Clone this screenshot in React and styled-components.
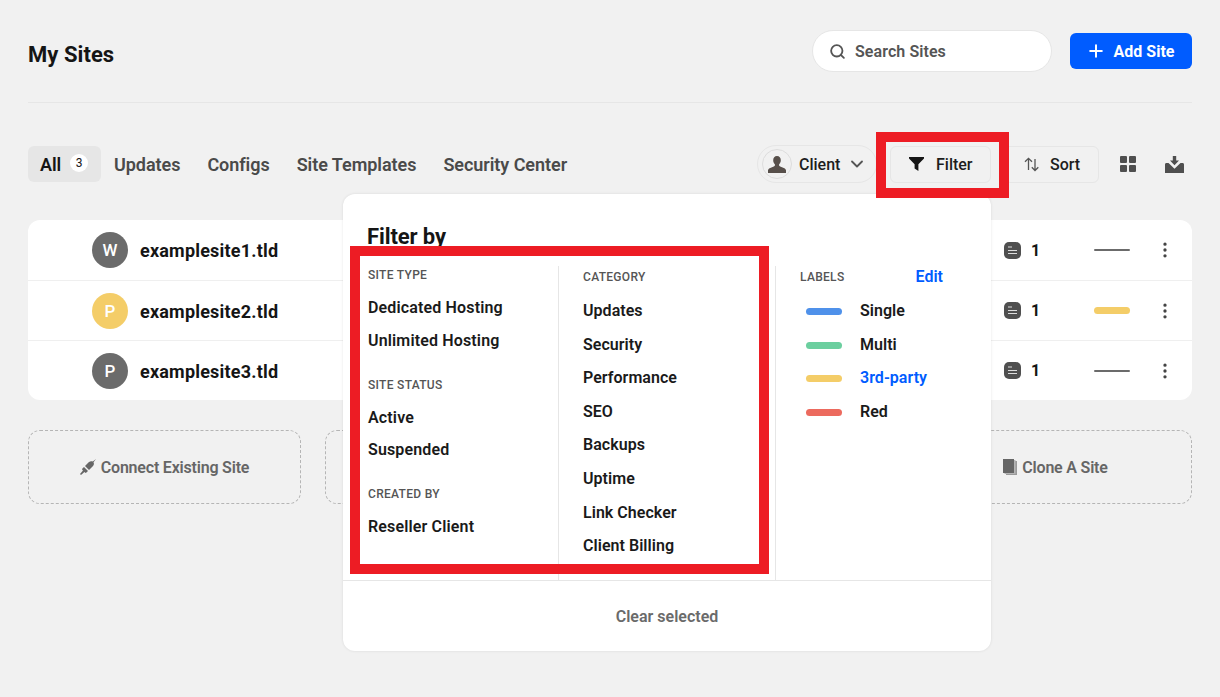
import React from "react";
import styled, { createGlobalStyle } from "styled-components";
import { Search, Plus, ChevronDown, MoreVertical } from "lucide-react";

const GlobalStyle = createGlobalStyle`
  html, body {
    margin: 0;
    background: #f1f1f1;
    font-family: Roboto, "Liberation Sans", sans-serif;
    color: #151515;
  }
  * {
    box-sizing: border-box;
  }
`;

const Page = styled.div`
  position: relative;
  width: 1220px;
  height: 697px;
  padding: 30px 28px 0;
  overflow: hidden;
`;

const Header = styled.header`
  display: flex;
  align-items: center;
  height: 73px;
  padding-bottom: 31px;
  border-bottom: 1px solid #e6e6e6;
`;

const Title = styled.h1`
  flex: 1;
  margin: 8px 0 0;
  font-size: 22px;
  font-weight: 700;
  line-height: 28px;
  letter-spacing: 0.05px;
  color: #151515;
`;

const SearchBox = styled.div`
  display: flex;
  align-items: center;
  gap: 9px;
  width: 240px;
  height: 42px;
  padding: 1px 0 0 16px;
  margin-right: 18px;
  background: #fff;
  border: 1px solid #e6e6e6;
  border-radius: 21px;
  font-size: 16px;
  font-weight: 600;
  letter-spacing: 0.08px;
  color: #555;
`;

const AddButton = styled.button`
  display: flex;
  align-items: center;
  justify-content: center;
  gap: 8px;
  width: 122px;
  height: 36px;
  padding: 1px 2px 0 0;
  border: 0;
  border-radius: 6px;
  background: #005cff;
  color: #fff;
  font: 700 16px Roboto, sans-serif;
`;

const Toolbar = styled.div`
  display: flex;
  align-items: center;
  height: 38px;
  margin-top: 42px;
`;

const Tabs = styled.nav`
  display: flex;
  align-items: center;
  flex: 1;
  gap: 27px;
`;

const Tab = styled.span`
  display: flex;
  align-items: center;
  gap: 9px;
  height: 36px;
  font-size: 18px;
  font-weight: 600;
  letter-spacing: -0.05px;
  color: ${(p) => (p.$active ? "#151515" : "#4a4a4a")};
  ${(p) =>
    p.$active &&
    `
    width: 73px;
    padding: 0 12px;
    margin-right: -14px;
    background: #e6e6e6;
    border-radius: 6px;
  `}
`;

const Count = styled.span`
  display: flex;
  align-items: center;
  justify-content: center;
  flex: none;
  width: 18px;
  height: 18px;
  margin-top: -2px;
  border-radius: 50%;
  background: #fff;
  font-size: 12px;
  font-weight: 400;
`;

const Controls = styled.div`
  display: flex;
  align-items: center;
  margin-right: 8px;
`;

const ClientButton = styled.div`
  display: flex;
  align-items: center;
  width: 120px;
  height: 38px;
  padding-left: 4px;
  border: 1px solid #e6e6e6;
  border-radius: 19px;
  font-size: 16px;
  font-weight: 500;
  color: #1d1d1d;
`;

const ClientAvatar = styled.span`
  display: flex;
  align-items: center;
  justify-content: center;
  width: 30px;
  height: 30px;
  margin-right: 7px;
  border: 1px solid #ddd;
  border-radius: 50%;
`;

const Chevron = styled(ChevronDown)`
  margin-left: 7px;
  color: #555;
`;

const ToolButton = styled.div`
  display: flex;
  align-items: center;
  gap: ${(p) => p.$gap}px;
  width: ${(p) => p.$width}px;
  height: 37px;
  padding-left: ${(p) => p.$pad}px;
  margin-left: 13px;
  border: 1px solid #e6e6e6;
  border-radius: 6px;
  font-size: 16px;
  font-weight: 500;
  color: #1d1d1d;
`;

const IconButton = styled.span`
  display: flex;
  margin-left: ${(p) => p.$left}px;
`;

const SiteList = styled.section`
  margin-top: 37px;
  background: #fff;
  border-radius: 12px;
`;

const SiteRow = styled.div`
  display: flex;
  align-items: center;
  height: 60px;
  padding: 0 17px 0 64px;
  border-top: ${(p) => (p.$first ? "0" : "1px solid #efefef")};
`;

const SiteIdentity = styled.div`
  display: flex;
  align-items: center;
  flex: 1;
  margin-top: ${(p) => (p.$first ? 0 : 1)}px;
`;

const SiteAvatar = styled.span`
  display: flex;
  align-items: center;
  justify-content: center;
  width: 36px;
  height: 36px;
  margin-right: 12px;
  border-radius: 50%;
  background: ${(p) => p.$color};
  color: #fff;
  font-size: 17px;
  font-weight: 500;
`;

const SiteName = styled.span`
  font-size: 18px;
  font-weight: 700;
  letter-spacing: 0.2px;
  color: #151515;
`;

const PageCount = styled.span`
  width: 63px;
  margin-left: 10px;
  font-size: 16px;
  font-weight: 700;
`;

const LabelBar = styled.span`
  display: block;
  width: 36px;
  height: ${(p) => (p.$thin ? "2px" : "7px")};
  border-radius: 4px;
  background: ${(p) => p.$color};
`;

const RowMenu = styled.span`
  display: flex;
  margin-left: 25px;
  color: #444;
`;

const ActionGrid = styled.div`
  display: grid;
  grid-template-columns: repeat(4, 1fr);
  gap: 24px;
  margin-top: 30px;
`;

const ActionCard = styled.div`
  display: flex;
  align-items: center;
  justify-content: center;
  gap: 5px;
  height: 74px;
  border: 1px dashed #b5b5b5;
  border-radius: 12px;
  font-size: 16px;
  font-weight: 600;
  letter-spacing: -0.2px;
  color: #666;
`;

const Popup = styled.div`
  position: absolute;
  top: 194px;
  left: 343px;
  display: flex;
  flex-direction: column;
  width: 648px;
  height: 457px;
  background: #fff;
  border-radius: 12px;
  box-shadow: 0 0 3px rgba(0, 0, 0, 0.1);
`;

const PopupTitle = styled.h2`
  height: 72px;
  margin: 0;
  padding: 29px 0 0 24px;
  font-size: 22px;
  font-weight: 700;
  line-height: 28px;
  letter-spacing: -0.1px;
  color: #151515;
`;

const Columns = styled.div`
  display: flex;
  height: 315px;
  border-bottom: 1px solid #e6e6e6;
`;

const Column = styled.div`
  width: ${(p) => p.$width}px;
  padding: ${(p) => p.$pad};
  border-left: ${(p) => (p.$divided ? "1px solid #e6e6e6" : "0")};
`;

const GroupLabel = styled.div`
  display: flex;
  justify-content: space-between;
  margin-bottom: ${(p) => p.$gap}px;
  font-size: 12px;
  font-weight: 500;
  line-height: 14px;
  letter-spacing: 0.3px;
  color: #555;
`;

const EditLink = styled.span`
  font-size: 16px;
  font-weight: 600;
  letter-spacing: 0;
  color: #005cff;
`;

const Option = styled.div`
  font-size: 16px;
  font-weight: 600;
  line-height: 20px;
  height: ${(p) => p.$height}px;
  letter-spacing: ${(p) => (p.$spaced ? "0.15px" : "0.04px")};
  color: ${(p) => (p.$active ? "#005cff" : "#1a1a1a")};
`;

const LabelOption = styled(Option)`
  display: flex;
  align-items: flex-start;
  gap: 18px;
  padding-left: 6px;
`;

const LabelSwatch = styled.span`
  width: 36px;
  height: 7px;
  margin-top: 7px;
  border-radius: 4px;
  background: ${(p) => p.$color};
`;

const PopupFooter = styled.div`
  flex: 1;
  display: flex;
  align-items: center;
  justify-content: center;
  font-size: 16px;
  font-weight: 600;
  color: #6a6a6a;
`;

const Highlight = styled.div`
  position: absolute;
  top: ${(p) => p.$top}px;
  left: ${(p) => p.$left}px;
  width: ${(p) => p.$width}px;
  height: ${(p) => p.$height}px;
  border: 10px solid #ed1c24;
  pointer-events: none;
`;

const PersonIcon = () => (
  <svg width="18" height="17" viewBox="0 0 18 17" fill="#574f4a">
    <path d="M9 0c2.400 0 3.800 1.800 3.800 4.200 0 1.700-.7 3.200-1.700 4.100v1.200c0 .8 1.800 1.200 3.500 1.900 1.500.6 3.400 1.400 3.400 2.900V17H0v-2.700c0-1.500 1.900-2.300 3.400-2.900 1.700-.7 3.500-1.100 3.500-1.900V8.300C5.900 7.400 5.200 5.900 5.200 4.200 5.200 1.800 6.600 0 9 0z" />
  </svg>
);

const FunnelIcon = () => (
  <svg width="15" height="14" viewBox="0 0 15 14" fill="#151515">
    <path d="M0 0h15v1.500L9.400 7.200V14L5.600 11.500V7.200L0 1.500z" />
  </svg>
);

const SortIcon = () => (
  <svg width="16" height="15" viewBox="0 0 16 15" fill="none" stroke="#555" strokeWidth="1.300">
    <path d="M4.500 13V1.500M1 4.800l3.500-3.500L8 4.800M11 2v11.500M7.800 10.200l3.200 3.300 3.300-3.300" />
  </svg>
);

const GridIcon = () => (
  <svg width="16" height="16" viewBox="0 0 16 16" fill="#4f4f4f">
    <rect width="7" height="7" rx="1" />
    <rect x="9" width="7" height="7" rx="1" />
    <rect y="9" width="7" height="7" rx="1" />
    <rect x="9" y="9" width="7" height="7" rx="1" />
  </svg>
);

const ExportIcon = () => (
  <svg width="19" height="17" viewBox="0 0 19 17" fill="#4f4f4f">
    <path d="M7.800 0h3.400v4.500h2.800l-4.500 4.700L5 4.500h2.800z" />
    <path d="M0 8.500C0 7.700.6 7 1.400 7H3.500l6 5.800L15.500 7h2.100c.8 0 1.400.7 1.400 1.500V17H0z" />
  </svg>
);

const PagesIcon = () => (
  <svg width="17" height="17" viewBox="0 0 17 17">
    <rect width="17" height="17" rx="5" fill="#4f4f4f" />
    <path d="M4 5h4M4 8.500h9M4 11.500h9" stroke="#ddd" strokeWidth="1.200" />
  </svg>
);

const PlugIcon = () => (
  <svg width="16" height="16" viewBox="0 0 16 16" fill="#666">
    <path d="M0 15l3-3.400-.6-.6a1 1 0 0 1 0-1.400L4 8l4 4-1.600 1.600a1 1 0 0 1-1.400 0l-.6-.6L1 16z" />
    <path d="M5 7l3.700-3.700c1.400-1.200 3-1.300 4.100-.7L16 0l-2.500 3.200c.7 1.100.6 2.700-.7 4.100L9 11z" />
  </svg>
);

const CloneIcon = () => (
  <svg width="14" height="16" viewBox="0 0 14 16">
    <rect x="3" y="2" width="11" height="14" fill="#9a9a9a" />
    <rect x="1.500" y="1" width="11" height="14" fill="#b5b5b5" />
    <rect width="11" height="14" fill="#666" />
  </svg>
);

const sites = [
  { name: "examplesite1.tld", letter: "W", color: "#6b6b6b", bar: "#6b6b6b", thin: true },
  { name: "examplesite2.tld", letter: "P", color: "#f4cd68", bar: "#f4cd68" },
  { name: "examplesite3.tld", letter: "P", color: "#6b6b6b", bar: "#6b6b6b", thin: true },
];

const categories = ["Updates", "Security", "Performance", "SEO", "Backups", "Uptime", "Link Checker", "Client Billing"];

const labels = [
  { name: "Single", color: "#4f91ea" },
  { name: "Multi", color: "#6bcf9f" },
  { name: "3rd-party", color: "#f4cd68", active: true },
  { name: "Red", color: "#ec6a5e" },
];

export default function App() {
  return (
    <Page>
      <GlobalStyle />
      <Header>
        <Title>My Sites</Title>
        <SearchBox>
          <Search size={17} strokeWidth={2.6} />
          Search Sites
        </SearchBox>
        <AddButton>
          <Plus size={20} strokeWidth={2.4} />
          Add Site
        </AddButton>
      </Header>

      <Toolbar>
        <Tabs>
          <Tab $active>
            All <Count>3</Count>
          </Tab>
          <Tab>Updates</Tab>
          <Tab>Configs</Tab>
          <Tab>Site Templates</Tab>
          <Tab>Security Center</Tab>
        </Tabs>
        <Controls>
          <ClientButton>
            <ClientAvatar>
              <PersonIcon />
            </ClientAvatar>
            Client
            <Chevron size={20} strokeWidth={2.2} />
          </ClientButton>
          <ToolButton $pad={18} $gap={12} $width={101}>
            <FunnelIcon />
            Filter
          </ToolButton>
          <ToolButton $pad={19} $gap={10} $width={95}>
            <SortIcon />
            Sort
          </ToolButton>
          <IconButton $left={21}>
            <GridIcon />
          </IconButton>
          <IconButton $left={29}>
            <ExportIcon />
          </IconButton>
        </Controls>
      </Toolbar>

      <SiteList>
        {sites.map((site, i) => (
          <SiteRow key={site.name} $first={i === 0}>
            <SiteIdentity $first={i === 0}>
              <SiteAvatar $color={site.color}>{site.letter}</SiteAvatar>
              <SiteName>{site.name}</SiteName>
            </SiteIdentity>
            <PagesIcon />
            <PageCount>1</PageCount>
            <LabelBar $color={site.bar} $thin={site.thin} />
            <RowMenu>
              <MoreVertical size={20} strokeWidth={2} />
            </RowMenu>
          </SiteRow>
        ))}
      </SiteList>

      <ActionGrid>
        <ActionCard>
          <PlugIcon />
          Connect Existing Site
        </ActionCard>
        <ActionCard />
        <ActionCard />
        <ActionCard>
          <CloneIcon />
          Clone A Site
        </ActionCard>
      </ActionGrid>

      <Popup>
        <PopupTitle>Filter by</PopupTitle>
        <Columns>
          <Column $width={215} $pad="2px 0 0 25px">
            <GroupLabel $gap={16}>SITE TYPE</GroupLabel>
            <Option $spaced $height={32.5}>Dedicated Hosting</Option>
            <Option $spaced $height={47}>Unlimited Hosting</Option>
            <GroupLabel $gap={16}>SITE STATUS</GroupLabel>
            <Option $spaced $height={32.5}>Active</Option>
            <Option $spaced $height={47}>Suspended</Option>
            <GroupLabel $gap={16}>CREATED BY</GroupLabel>
            <Option $spaced $height={32.5}>Reseller Client</Option>
          </Column>
          <Column $width={217} $divided $pad="4px 0 0 24px">
            <GroupLabel $gap={17}>CATEGORY</GroupLabel>
            {categories.map((name) => (
              <Option key={name} $height={33.6}>{name}</Option>
            ))}
          </Column>
          <Column $width={216} $divided $pad="4px 48px 0 24px">
            <GroupLabel $gap={17}>
              LABELS
              <EditLink>Edit</EditLink>
            </GroupLabel>
            {labels.map((label) => (
              <LabelOption key={label.name} $height={33.6} $active={label.active}>
                <LabelSwatch $color={label.color} />
                {label.name}
              </LabelOption>
            ))}
          </Column>
        </Columns>
        <PopupFooter>Clear selected</PopupFooter>
      </Popup>

      <Highlight $top={132} $left={876} $width={133} $height={66} />
      <Highlight $top={246} $left={350} $width={419} $height={328} />
    </Page>
  );
}
